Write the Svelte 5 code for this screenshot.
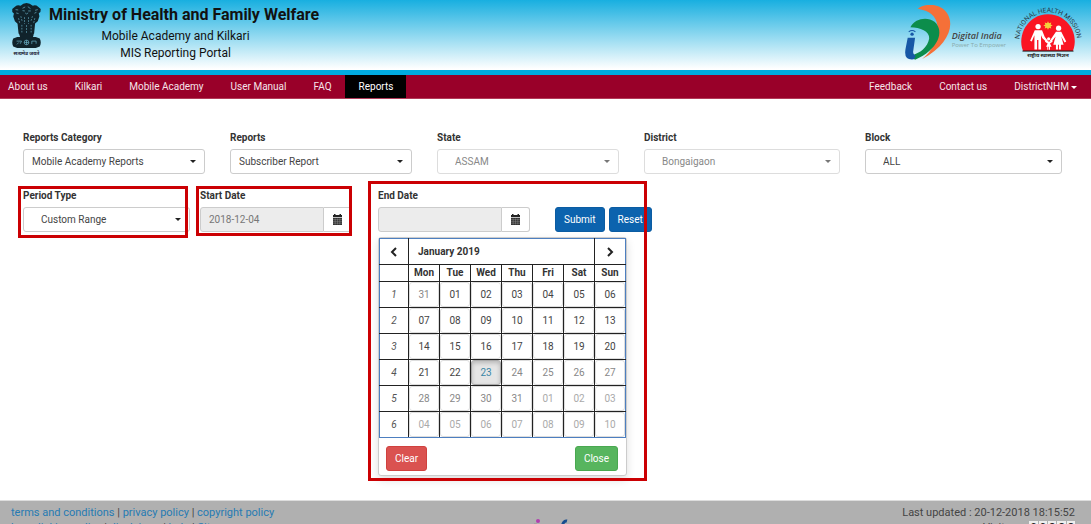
<script>
  const leftNav = ['About us', 'Kilkari', 'Mobile Academy', 'User Manual', 'FAQ', 'Reports'];
  const rightNav = ['Feedback', 'Contact us'];
  const filters = [
    { id: 'category', label: 'Reports Category', value: 'Mobile Academy Reports' },
    { id: 'report', label: 'Reports', value: 'Subscriber Report' },
    { id: 'state', label: 'State', value: 'ASSAM', disabled: true, indent: true },
    { id: 'district', label: 'District', value: 'Bongaigaon', disabled: true, indent: true },
    { id: 'block', label: 'Block', value: 'ALL', indent: true }
  ];
  const weekdays = ['Mon', 'Tue', 'Wed', 'Thu', 'Fri', 'Sat', 'Sun'];
  const selectedIndex = 23;
  const weeks = Array.from({ length: 6 }, (_, w) =>
    Array.from({ length: 7 }, (_, d) => {
      const index = w * 7 + d;
      const day = index === 0 ? 31 : index > 31 ? index - 31 : index;
      return {
        text: String(day).padStart(2, '0'),
        selected: index === selectedIndex,
        future: index > selectedIndex,
        previous: index === 0,
        outside: index > 31
      };
    })
  );
</script>

{#snippet calendarIcon()}
  <svg class="cal-icon" viewBox="0 0 11 11" aria-hidden="true">
    <path d="M1 1h1V0h1.5v1h4V0H9v1h1v2H1z" fill="#222" />
    <path d="M1 3.7h9V11H1z" fill="#333" />
    <path d="M1 5.6h9M1 7.4h9M1 9.2h9M3.2 4.5v6M5.5 4.5v6M7.8 4.5v6" stroke="#999" stroke-width=".4" />
  </svg>
{/snippet}

<div class="page">
  <header class="banner">
    <svg class="emblem" viewBox="0 0 96 160" aria-label="National emblem">
      <g fill="#10232b">
        <path d="M30 8q8-8 18-8t19 8q9-3 16 3l8 7-1 9-5 4 2 9-5 15-8 7-3 30-7 7H31l-7-7-3-29-8-8-5-14 2-9-5-5v-9l8-7q8-6 17-3z" />
        <path d="M26 94h44l-3 10H29z" />
        <path d="M20 103h56l12 4q6 12 0 24l-12 5H20l-12-5q-6-12 0-24z" />
      </g>
      <g fill="none" stroke="#6fb7cf" stroke-width="2">
        <path d="M36 16l8-4M52 11l8 6M36 23l7 1m10 0h8M44 30l4 3 5-3M15 20l8 1M74 22l8-2M17 30l7 2M72 31l6-3" />
        <path d="M31 40l4 16M42 43v20M54 43v20M66 40l-5 16M24 46l4 17M73 46l-4 17M48 67v23M34 66v24M62 66v24" stroke-dasharray="5 4" />
        <circle cx="48" cy="119" r="7" />
        <path d="M18 115h15l-4 8M19 125l6-6M64 124v-9h13v8M41 119h14M48 112v14" />
      </g>
      <text x="48" y="156" text-anchor="middle" font-size="15" font-weight="bold" fill="#223">सत्यमेव जयते</text>
    </svg>
    <div class="titles">
      <h1>Ministry of Health and Family Welfare</h1>
      <p>Mobile Academy and Kilkari</p>
      <p>MIS Reporting Portal</p>
    </div>
    <div class="logos">
      <svg class="digital" viewBox="0 0 140 164" aria-label="Digital India">
        <path d="M38 11C63-8 108-4 126 25c24 39-1 97-75 136C83 135 101 98 97 63 93 31 73 17 38 11z" fill="#f57038" />
        <path d="M16 66C30 40 66 34 88 50 120 78 98 135 30 163 24 160 19 155 18 150 45 145 68 125 72 100 74 78 45 66 16 66z" fill="#0c8d4b" />
        <path d="M8 98h22l-6 42q0 8 8 12l-6 10Q-6 166 2 128z" fill="#1757a6" />
        <circle cx="21" cy="87" r="5" fill="#1757a6" />
        <path d="M11 80q10-8 20 0" fill="none" stroke="#1757a6" stroke-width="3" />
      </svg>
      <div class="digital-text"><strong>Digital India</strong><span>Power To Empower</span></div>
      <svg class="nhm" viewBox="0 0 210 160" aria-label="National Health Mission">
        <defs><path id="mission-arc" d="M25 139A87 87 0 1 1 187 137" /></defs>
        <path d="M30 136C10 91 43 25 105 25s95 64 75 111z" fill="#fa1523" />
        <text font-size="20" fill="#283b48"><textPath href="#mission-arc" startOffset="50%" text-anchor="middle">NATIONAL HEALTH MISSION</textPath></text>
        <path d="M105 46l3 6 7-2-2 6 6 3-6 3 2 6-7-2-3 6-3-6-7 2 2-6-6-3 6-3-2-6 7 2z" fill="#f4d13c" />
        <g fill="#fff">
          <circle cx="75" cy="62" r="8" />
          <path d="M65 73h22l8 20 11 14-4 3-14-13-4-9v43h-8v-28h-4v28h-8V88l-8 19-5-2z" />
          <circle cx="137" cy="67" r="8" />
          <path d="M129 78h16l15 29-5 3-10-18 7 25h-8v14h-6v-14h-3v14h-6v-14h-8l7-25-13 17-5-3z" />
          <circle cx="107" cy="99" r="5" />
          <path d="M97 105l7 2h7l7-2 1 3-8 5 5 10h-5v9h-3v-9h-2v9h-3v-9h-4l5-10-8-5z" />
        </g>
        <path d="M28 136h154" stroke="#111" stroke-width="3" />
        <text x="105" y="153" text-anchor="middle" font-size="16" font-weight="bold" fill="#222">राष्ट्रीय स्वास्थ्य मिशन</text>
      </svg>
    </div>
  </header>

  <nav class="nav">
    <div class="nav-group">
      {#each leftNav as item}
        <a href="#{item}" class:active={item === 'Reports'}>{item}</a>
      {/each}
    </div>
    <div class="nav-group">
      {#each rightNav as item}
        <a href="#{item}">{item}</a>
      {/each}
      <a href="#account">DistrictNHM<span class="nav-caret"></span></a>
    </div>
  </nav>

  <main>
    <div class="filters">
      {#each filters as f}
        <div class="field">
          <label for={f.id}>{f.label}</label>
          <div class="select" class:off={f.disabled}>
            <select id={f.id} class:indent={f.indent} disabled={f.disabled}><option>{f.value}</option></select>
          </div>
        </div>
      {/each}
    </div>

    <div class="range">
      <div class="field period marked">
        <label for="period">Period Type</label>
        <div class="select"><select id="period" class="indent"><option>Custom Range</option></select></div>
      </div>
      <div class="field date start marked">
        <label for="start">Start Date</label>
        <div class="group">
          <input id="start" type="text" value="2018-12-04" readonly />
          <button type="button" aria-label="Pick start date">{@render calendarIcon()}</button>
        </div>
      </div>
      <div class="field date end marked">
        <label for="end">End Date</label>
        <div class="group">
          <input id="end" type="text" value="" readonly />
          <button type="button" aria-label="Pick end date">{@render calendarIcon()}</button>
        </div>

        <div class="popup">
          <table>
            <thead>
              <tr class="month">
                <th><button type="button" aria-label="Previous month"><svg viewBox="0 0 10 10"><path d="M7 1L3 5l4 4" /></svg></button></th>
                <th colspan="6"><button type="button" class="month-name">January 2019</button></th>
                <th><button type="button" aria-label="Next month"><svg viewBox="0 0 10 10"><path d="M3 1l4 4-4 4" /></svg></button></th>
              </tr>
              <tr class="days">
                <th class="week"></th>
                {#each weekdays as day}<th>{day}</th>{/each}
              </tr>
            </thead>
            <tbody>
              {#each weeks as week, i}
                <tr>
                  <td class="week"><em>{i + 1}</em></td>
                  {#each week as day}
                    <td>
                      <button type="button" class="day" class:selected={day.selected} class:future={day.future || day.previous} class:outside={day.outside}>{day.text}</button>
                    </td>
                  {/each}
                </tr>
              {/each}
            </tbody>
          </table>
          <div class="popup-actions">
            <button type="button" class="btn danger">Clear</button>
            <button type="button" class="btn success">Close</button>
          </div>
        </div>
      </div>
      <div class="actions">
        <button type="button" class="btn primary">Submit</button>
        <button type="button" class="btn primary">Reset</button>
      </div>
    </div>
  </main>

  <footer>
    <div class="links">
      <div><a href="#terms">terms and conditions</a> | <a href="#privacy">privacy policy</a> | <a href="#copyright">copyright policy</a></div>
      <div><a href="#linking">hyperlinking policy</a> | <a href="#disclaimer">disclaimer</a> | <a href="#help">help</a> | <a href="#sitemap">Sitemap</a></div>
    </div>
    <svg class="footer-logo" viewBox="0 0 110 30" aria-hidden="true">
      <path d="M46 6q5-1 6 5v14" fill="none" stroke="#999" stroke-width="1" />
      <circle cx="50" cy="3" r="2" fill="#b13fae" />
      <path d="M79 3q-4-1-5 7l-2 18" fill="none" stroke="#174c8f" stroke-width="3" />
    </svg>
    <div class="status">
      <div>Last updated : 20-12-2018 18:15:52</div>
      <div class="visitors">Visitors : <span class="counter"><b>0</b><b>0</b><b>8</b><b>8</b><b>8</b></span></div>
    </div>
  </footer>
</div>

<style>
  :global(body) { background: #fff; }
  * { box-sizing: border-box; }
  .page {
    height: 100vh;
    overflow: hidden;
    font: 10px/16px Roboto, "Noto Sans", sans-serif;
    color: #333;
  }
  button, input, select { font: inherit; color: inherit; margin: 0; }
  a { text-decoration: none; }

  .banner {
    display: flex;
    align-items: flex-start;
    height: 75px;
    padding: 3px 8px 0 10px;
    background: linear-gradient(#18afe0, #fff 69px);
    border-bottom: 5px solid #00abe0;
  }
  .emblem { width: 33px; height: 53px; flex: none; }
  .titles { margin-left: 6px; color: #111; text-align: center; white-space: nowrap; }
  h1 { margin: 0 0 1px; font-size: 16px; line-height: 24px; font-weight: 700; }
  p { margin: 0 17px 0 0; font-size: 12px; line-height: 17px; }
  .logos { display: flex; margin-left: auto; }
  .digital { width: 47px; height: 55px; margin-top: 2px; }
  .digital-text { display: flex; flex-direction: column; margin-top: 27px; color: #444; white-space: nowrap; }
  .digital-text strong { font: italic 600 9px/12px "Open Sans", sans-serif; }
  .digital-text span { font: 6px/6px "Open Sans", sans-serif; color: #8aa; }
  .nhm { width: 70px; height: 53px; margin: 3px 0 0 7px; overflow: visible; }

  .nav {
    display: flex;
    justify-content: space-between;
    padding-right: 1px;
    background: #990029;
    border-bottom: 1px solid #b23a58;
  }
  .nav-group { display: flex; }
  .nav a { padding: 0 13px 0 14px; line-height: 23px; color: #f5e4e9; white-space: nowrap; }
  .nav-group:first-child a:first-child { padding-left: 8px; }
  .nav a.active { background: #000; color: #fff; }
  .nav-caret {
    display: inline-block;
    margin-left: 2px;
    border: 3px solid transparent;
    border-top-color: #fff;
    border-bottom: 0;
    vertical-align: middle;
  }

  main { min-height: calc(100vh - 123px); padding: 31px 29px 0 23px; }
  .filters {
    display: grid;
    grid-template-columns: 182fr 182fr 182fr 196fr 197fr;
    gap: 25px;
  }
  .field { position: relative; min-width: 0; }
  label { display: block; margin-bottom: 3px; font-weight: 700; }
  .select { position: relative; }
  .select::after {
    content: "";
    position: absolute;
    right: 9px;
    top: 11px;
    border: 3px solid transparent;
    border-top-color: #222;
    border-bottom: 0;
    pointer-events: none;
  }
  select {
    appearance: none;
    display: block;
    width: 100%;
    height: 25px;
    padding: 0 20px 0 8px;
    border: 1px solid #ccc;
    border-radius: 3px;
    background: #fff;
    color: #444;
  }
  select.indent { padding-left: 17px; }
  .off select { color: #888; border-color: #ddd; opacity: 1; }
  .off::after { border-top-color: #777; }

  .range { display: flex; align-items: flex-end; margin-top: 14px; }
  .period { width: 167px; }
  .start { width: 152px; margin-left: 10px; }
  .end { width: 152px; margin-left: 26px; }
  .group { display: flex; }
  input {
    width: 0;
    flex: 1;
    height: 25px;
    padding: 0 8px;
    border: 1px solid #ccc;
    border-radius: 3px 0 0 3px;
    background: #ececec;
    color: #777;
  }
  .group button {
    width: 28px;
    height: 25px;
    padding: 0;
    border: 1px solid #ccc;
    border-left: 0;
    border-radius: 0 3px 3px 0;
    background: #fff;
  }
  .cal-icon { display: block; width: 11px; height: 11px; margin: auto; }
  .actions { display: flex; gap: 4px; margin-left: 25px; }
  .btn {
    height: 25px;
    padding: 0 8px;
    border: 1px solid;
    border-radius: 3px;
    color: #fff;
  }
  .primary { background: #0c63ae; border-color: #0b5ca2; }
  .danger { background: #da5250; border-color: #d0413e; }
  .success { background: #57b55e; border-color: #49a850; }

  .marked::after {
    content: "";
    position: absolute;
    z-index: 3;
    border: 3px solid #cb0003;
    pointer-events: none;
  }
  .period::after { inset: -2px 2px -6px -5px; }
  .start::after { inset: -2px 0 -4px -4px; }
  .end::after { inset: -7px -117px -249px -10px; }

  .popup {
    position: absolute;
    z-index: 2;
    top: 49px;
    left: 0;
    width: 249px;
    border: 1px solid #ccc;
    border-radius: 3px;
    background: #fff;
    box-shadow: 0 4px 9px #0002;
  }
  table {
    width: 100%;
    table-layout: fixed;
    border-collapse: collapse;
    border: 1px solid #4d7fc0;
  }
  th, td { height: 26px; padding: 0; border: 1px solid #222; text-align: center; }
  th:first-child { width: 29px; }
  tr > :first-child { border-left-color: #4d7fc0; }
  tr > :last-child { border-right-color: #4d7fc0; }
  .month th { border-top-color: #4d7fc0; }
  tbody tr:last-child td { border-bottom-color: #4d7fc0; }
  .days th { height: 17px; line-height: 16px; }
  th button {
    display: block;
    width: 100%;
    height: 25px;
    padding: 0;
    border: 0;
    background: none;
    font-weight: 700;
  }
  .month-name { padding-left: 9px; text-align: left; }
  th svg { display: block; width: 10px; height: 10px; margin: auto; fill: none; stroke: #222; stroke-width: 2; }
  .week em { color: #555; }
  .day {
    display: block;
    width: 100%;
    height: 25px;
    padding: 0;
    border: 1px solid #ddd;
    border-radius: 3px;
    background: #fff;
    color: #444;
  }
  .day.future { color: #888; }
  .day.outside { color: #aaa; }
  .day.selected { background: #e5e5e5; border-color: #aaa; color: #3a87a5; box-shadow: inset 0 2px 4px #0003; }
  .popup-actions { display: flex; justify-content: space-between; padding: 8px 8px 4px 7px; }

  footer {
    display: grid;
    grid-template-columns: 1fr 110px 1fr;
    padding: 4px 16px 0 11px;
    border-top: 1px solid #ddd;
    background: #b0b0b0;
    font-size: 11px;
    line-height: 15px;
    color: #444;
    white-space: nowrap;
  }
  footer a { color: #267bb3; }
  .footer-logo { width: 110px; height: 30px; margin-top: 13px; }
  .status { text-align: right; }
  .counter b { margin-left: 1px; padding: 0 1px; background: #eee; color: #222; }
</style>
